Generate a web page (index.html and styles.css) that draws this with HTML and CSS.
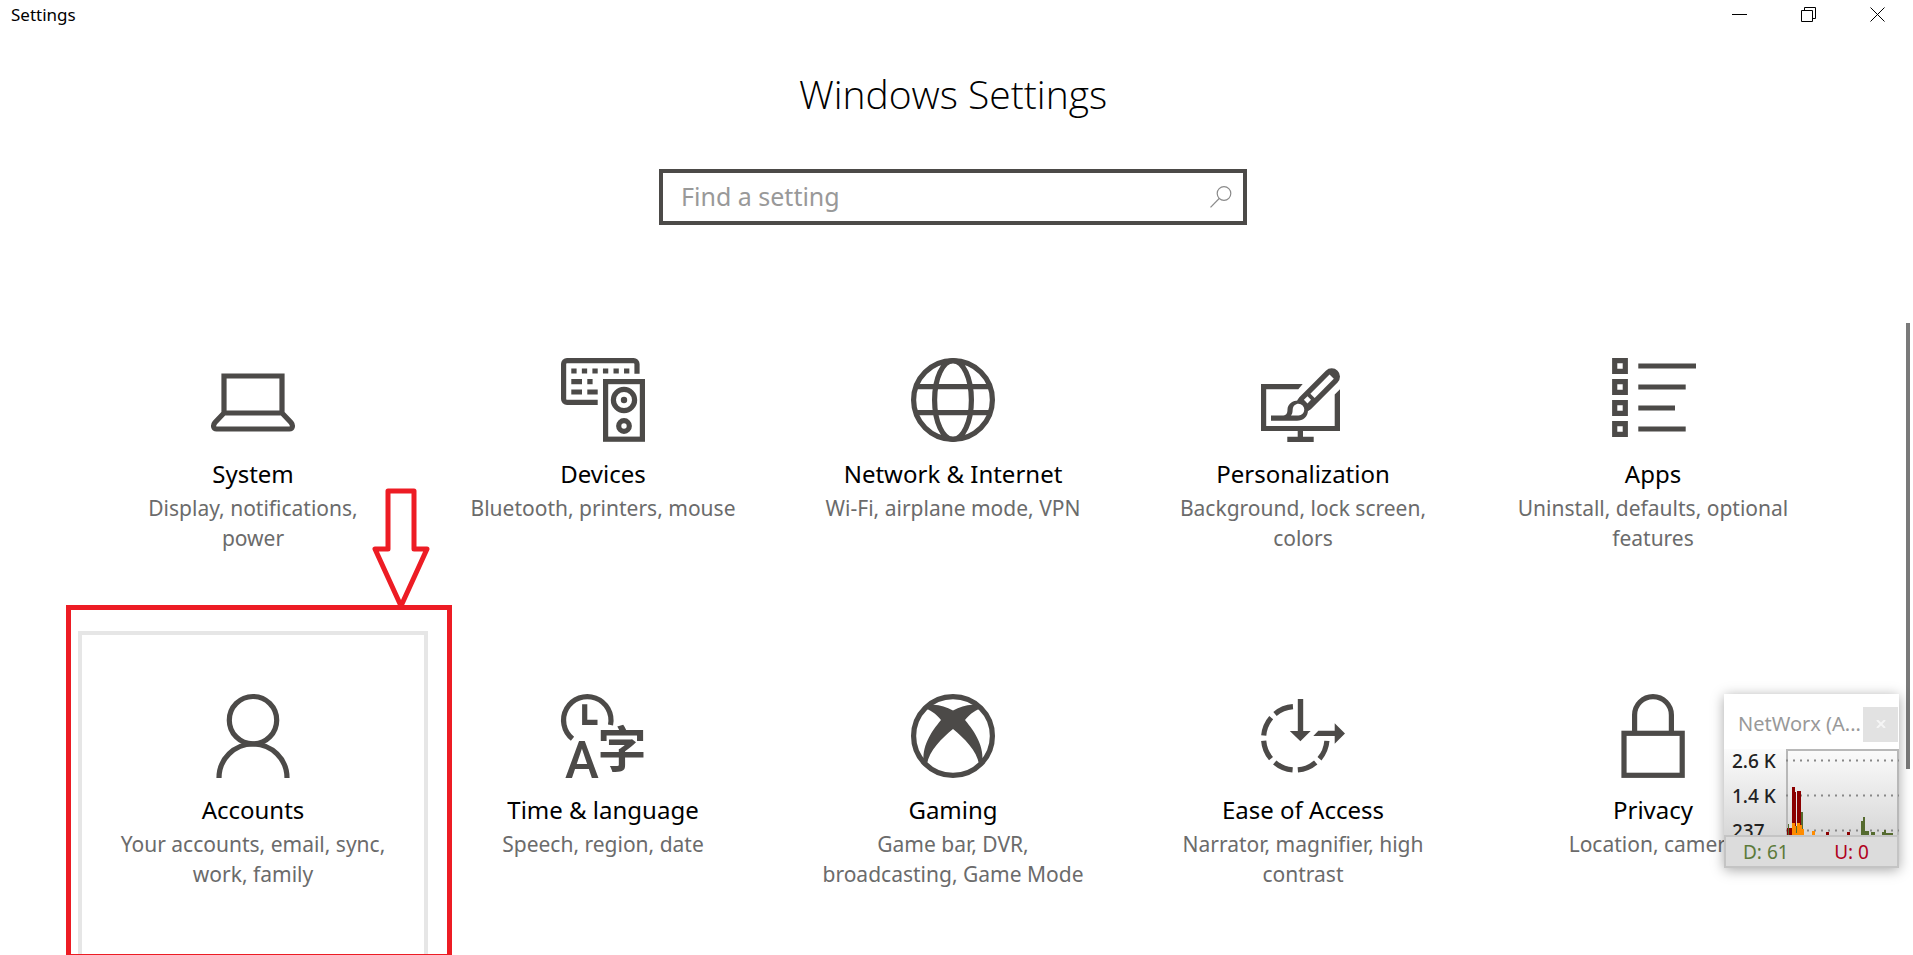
FILE: index.html
```html
<!DOCTYPE html>
<html lang="en">
<head>
  <meta charset="UTF-8">
  <meta name="viewport" content="width=device-width, initial-scale=1.0">
  <title>Settings</title>
  <link rel="stylesheet" href="styles.css">
</head>
<body>
  <div class="titlebar">
    <span class="titlebar-text">Settings</span>
    <div class="window-controls">
      <button class="window-btn" aria-label="Minimize">
        <svg width="15" height="15" viewBox="0 0 15 15"><path d="M0 7.5H15"/></svg>
      </button>
      <button class="window-btn" aria-label="Restore">
        <svg width="15" height="15" viewBox="0 0 15 15"><path d="M.5 3.5H11.5V14.5H.5ZM3.5 3V.5H14.5V11.5H12"/></svg>
      </button>
      <button class="window-btn" aria-label="Close">
        <svg width="15" height="15" viewBox="0 0 15 15"><path d="M.5 .5L14.5 14.5M14.5 .5L.5 14.5"/></svg>
      </button>
    </div>
  </div>

  <main class="settings">
    <h1>Windows Settings</h1>

    <form class="search">
      <input type="text" class="search-input" placeholder="Find a setting" aria-label="Find a setting">
      <button type="button" class="search-btn" aria-label="Search">
        <svg width="22" height="22" viewBox="0 0 22 22"><circle cx="14" cy="7.5" r="6.8"/><path d="M9.2 12.5L.5 21.3"/></svg>
      </button>
    </form>

    <div class="tiles">
      <a href="#system" class="tile">
        <svg class="icon" viewBox="0 0 84 84">
          <path d="M13 55V18H71V55ZM13 55L4 64.5C1.5 67.5 2.5 71 5.5 71H78.5C81.5 71 82.5 67.5 80 64.5L71 55"/>
        </svg>
        <span class="tile-title">System</span>
        <span class="tile-text">Display, notifications, power</span>
      </a>

      <a href="#devices" class="tile">
        <svg class="icon" viewBox="0 0 84 84">
          <path d="M76 15.7V6A3.4 3.4 0 0 0 72.6 2.6H6A3.4 3.4 0 0 0 2.6 6V41A3.4 3.4 0 0 0 6 44.4H36.7"/>
          <path d="M10.3 13H68.5" stroke-dasharray="5.3 5.25"/>
          <path d="M10.3 23.6H21M26.3 23.6H31.6M10.3 34H21M26.3 34H36.7"/>
          <rect x="44.6" y="23.6" width="36.8" height="57.6"/>
          <circle cx="63" cy="42" r="10.6"/>
          <circle cx="63" cy="42" r="3.2" class="solid"/>
          <circle cx="63" cy="68" r="5.3"/>
        </svg>
        <span class="tile-title">Devices</span>
        <span class="tile-text">Bluetooth, printers, mouse</span>
      </a>

      <a href="#network" class="tile">
        <svg class="icon" viewBox="0 0 84 84">
          <circle cx="42" cy="42" r="39.4"/>
          <ellipse cx="42" cy="42" rx="18.4" ry="39.4"/>
          <path d="M5 28.7H79M5 54.7H79"/>
        </svg>
        <span class="tile-title">Network &amp; Internet</span>
        <span class="tile-text">Wi-Fi, airplane mode, VPN</span>
      </a>

      <a href="#personalization" class="tile">
        <svg class="icon" viewBox="0 0 84 84">
          <path class="solid" d="M0 26H41.7L37.3 31.3H5.2V68H73.7V36.5L79 31.3V73H42V78.7H52.7V84H26.3V78.7H36.7V73H0Z"/>
          <path class="handle" d="M70.7 18.6L44 45.3"/>
          <path class="solid" d="M10 57.6H21C25 57.6 26.5 56 26.5 51C27 46 32 42.6 37 42.6C43 43 47 47 47 52C47 59 42 62.8 36 62.8H10Z"/>
          <path class="hollow-line" d="M70.7 18.6L51.5 37.8"/>
          <path class="hollow" d="M46.5 38.2L50 41.8L46.5 45.4L42.9 41.8Z"/>
          <path class="hollow" d="M37.5 45.8A5.8 5.8 0 0 1 37.5 57.4H30C32 55 31.4 53 31.7 51.5C32 48 34.5 45.8 37.5 45.8Z"/>
        </svg>
        <span class="tile-title">Personalization</span>
        <span class="tile-text">Background, lock screen, colors</span>
      </a>

      <a href="#apps" class="tile">
        <svg class="icon" viewBox="0 0 84 84">
          <path d="M3.7 2.7H14.3V13.3H3.7ZM3.7 23.7H14.3V34.3H3.7ZM3.7 44.7H14.3V55.3H3.7ZM3.7 65.7H14.3V76.3H3.7Z"/>
          <path d="M27.3 8H85M27.3 29H74.7M27.3 50H64M27.3 71H74.7"/>
        </svg>
        <span class="tile-title">Apps</span>
        <span class="tile-text">Uninstall, defaults, optional features</span>
      </a>

      <a href="#accounts" class="tile active">
        <svg class="icon" viewBox="0 0 84 84">
          <circle cx="42" cy="26.2" r="23.7"/>
          <path d="M8 84A34 34 0 0 1 76 84"/>
        </svg>
        <span class="tile-title">Accounts</span>
        <span class="tile-text">Your accounts, email, sync, work, family</span>
        <span class="highlight"></span>
        <svg class="arrow" width="60" height="122" viewBox="0 0 60 122">
          <path d="M16 3H42V61H55L29 118L3 61H16Z"/>
        </svg>
      </a>

      <a href="#time" class="tile">
        <svg class="icon" viewBox="0 0 84 84">
          <path d="M11.5 44.8A23.7 23.7 0 1 1 49.5 31"/>
          <path d="M23.7 10.3V28.4H36.5"/>
          <text class="letter" x="21" y="84" font-size="51">A</text>
          <text class="hanzi" x="61" y="73" font-size="49">字</text>
        </svg>
        <span class="tile-title">Time &amp; language</span>
        <span class="tile-text">Speech, region, date</span>
      </a>

      <a href="#gaming" class="tile">
        <svg class="icon" viewBox="0 0 84 84">
          <circle cx="42" cy="42" r="39.4"/>
          <path class="solid" d="M12 14C20 8 32 11 42 16.5C52 11 64 8 72 14C65 15 59 20 54 26C64 38 74 53 71 70L68 70C66 57 53 44 42 35C31 44 18 57 16 70L13 70C10 53 20 38 30 26C25 20 19 15 12 14Z"/>
        </svg>
        <span class="tile-title">Gaming</span>
        <span class="tile-text">Game bar, DVR, broadcasting, Game Mode</span>
      </a>

      <a href="#ease" class="tile">
        <svg class="icon" viewBox="0 0 84 84">
          <path d="M66 44.3A31.7 31.7 0 1 1 34.3 12.6" stroke-dasharray="19.6 5.3" stroke-dashoffset="-2.65"/>
          <path class="solid" d="M36.8 5H42.2V37H49.7L39.4 47.3L28.8 37H36.8Z"/>
          <path class="solid" d="M57.3 36.8H73.7V29.2L84 39.4L73.7 49.8V42H52.3Z"/>
        </svg>
        <span class="tile-title">Ease of Access</span>
        <span class="tile-text">Narrator, magnifier, high contrast</span>
      </a>

      <a href="#privacy" class="tile">
        <svg class="icon" viewBox="0 0 84 84">
          <rect x="13" y="39.3" width="58.2" height="42"/>
          <path d="M23.6 38V21A18.4 18.4 0 0 1 60.4 21V38"/>
        </svg>
        <span class="tile-title">Privacy</span>
        <span class="tile-text">Location, camera</span>
      </a>
    </div>
  </main>

  <div class="scrollbar"></div>

  <!-- NetWorx floating widget -->
  <div class="networx">
    <div class="networx-header">
      <span class="networx-title">NetWorx (A...</span>
      <button class="networx-close" aria-label="Close NetWorx">
        <svg width="10" height="8" viewBox="0 0 10 8"><path d="M1 0L9 8M9 0L1 8"/></svg>
      </button>
    </div>
    <div class="networx-body">
      <div class="networx-scale">
        <span>2.6 K</span>
        <span>1.4 K</span>
        <span>237</span>
      </div>
      <svg class="networx-chart" width="113" height="86" viewBox="0 0 113 86">
        <path class="frame" d="M1 86V1H112V86"/>
        <path class="dots" d="M0 11.5H113M0 46.5H113M0 81.5H113"/>
        <path class="up" d="M1 86V79H6V38H9V43H10V86ZM11 86V42H15V86ZM40 86V83H43V86ZM61 86V83H64V86Z"/>
        <path class="both" d="M6 86V74H9V77H11V74H14V76H16V80H18V86ZM26 86V82H29V86Z"/>
        <path class="down" d="M2 86V75H3V86ZM15 76V63H17V80H16V76ZM10 84V77H11V84ZM75 86V72H77V68H79V82H83V86ZM85 86V83H89V86ZM96 86V83H98V81H100V84H107V86Z"/>
      </svg>
    </div>
    <div class="networx-footer">
      <span class="rate-down">D: 61</span>
      <span class="rate-up">U: 0</span>
    </div>
  </div>
</body>
</html>
```
FILE: styles.css
```css
* {
  margin: 0;
  padding: 0;
  box-sizing: border-box;
}

body {
  height: 100vh;
  overflow: hidden;
  position: relative;
  background-color: #fff;
  color: #000;
  font-family: 'Segoe UI', 'Noto Sans', 'Open Sans', sans-serif;
}

button {
  border: none;
  background: none;
  font: inherit;
}

/* Title bar */
.titlebar {
  display: flex;
  justify-content: space-between;
  align-items: center;
  height: 30px;
  padding: 0 1px 0 11px;
}

.titlebar-text {
  font-size: 17px;
  line-height: 30px;
}

.window-controls {
  display: flex;
}

.window-btn {
  display: flex;
  justify-content: center;
  width: 69px;
  height: 30px;
  padding-top: 7px;
}

.window-btn svg {
  fill: none;
  stroke: #000;
}

/* Main area */
.settings {
  padding-right: 7px;
}

h1 {
  margin-top: 37px;
  font-family: 'Segoe UI Light', 'Open Sans', sans-serif;
  font-size: 39px;
  font-weight: 300;
  line-height: 54px;
  text-align: center;
}

.search {
  display: flex;
  align-items: center;
  width: 588px;
  height: 56px;
  margin: 48px auto 70px;
  padding: 0 11px 0 18px;
  border: 4px solid #4c4a48;
}

.search-input {
  flex: 1;
  height: 46px;
  margin-bottom: 2px;
  border: none;
  outline: none;
  background: transparent;
  font: inherit;
  font-size: 25px;
}

.search-input::placeholder {
  color: #999;
  opacity: 1;
}

.search-btn svg {
  display: block;
  fill: none;
  stroke: #8a8a8a;
  stroke-width: 1.2;
}

/* Tiles */
.tiles {
  display: grid;
  grid-template-columns: repeat(auto-fit, 350px);
  grid-auto-rows: 336px;
  justify-content: center;
  padding: 0 70px;
}

.tile {
  position: relative;
  display: flex;
  flex-direction: column;
  align-items: center;
  padding: 59px 34px 0;
  border: 4px solid transparent;
  color: inherit;
  text-align: center;
  text-decoration: none;
}

.tile.active {
  border-color: #e6e6e6;
}

.icon {
  width: 84px;
  height: 84px;
  margin-bottom: 13px;
  overflow: visible;
  fill: none;
  stroke: #4c4a48;
  stroke-width: 5.2;
}

.icon .solid {
  fill: #4c4a48;
  stroke: none;
}

.icon .hollow {
  fill: #fff;
  stroke: none;
}

.icon .handle {
  stroke-width: 16.6;
  stroke-linecap: round;
}

.icon .hollow-line {
  stroke: #fff;
  stroke-width: 6;
}

.icon text {
  fill: #4c4a48;
  stroke: none;
  text-anchor: middle;
}

.icon .letter {
  font-family: 'Roboto', sans-serif;
  font-weight: 500;
}

.icon .hanzi {
  font-family: 'Noto Sans CJK SC', sans-serif;
  font-weight: 700;
}

.tile-title {
  font-size: 24px;
  line-height: 38px;
}

.tile-text {
  color: #6b6b6b;
  font-size: 21px;
  line-height: 30px;
}

/* Red marker round the Accounts tile */
.highlight {
  position: absolute;
  top: -30px;
  left: -16px;
  width: 386px;
  height: 354px;
  border: 5px solid #ed1c24;
}

.arrow {
  position: absolute;
  top: -147px;
  left: 290px;
  fill: none;
  stroke: #ed1c24;
  stroke-width: 5;
  stroke-linejoin: round;
}

.scrollbar {
  position: absolute;
  top: 323px;
  right: 3px;
  width: 4px;
  height: 446px;
  background-color: #7a7a7a;
}

/* NetWorx widget */
.networx {
  position: absolute;
  right: 14px;
  bottom: 87px;
  width: 175px;
  background-color: #fff;
  box-shadow: 0 2px 12px rgba(0, 0, 0, 0.35);
}

.networx-header {
  display: flex;
  justify-content: space-between;
  align-items: center;
  height: 55px;
  padding: 10px 1px 5px 14px;
}

.networx-title {
  color: #999;
  font-size: 20px;
  line-height: 30px;
  white-space: nowrap;
}

.networx-close {
  display: flex;
  flex-shrink: 0;
  justify-content: center;
  align-items: center;
  width: 35px;
  height: 35px;
  background-color: #e2e2e2;
}

.networx-close svg {
  stroke: #f5f5f5;
  stroke-width: 2;
}

.networx-body {
  display: flex;
  justify-content: space-between;
  height: 86px;
  overflow: hidden;
  background: linear-gradient(#fbfbfb, #d8d8d8);
}

.networx-scale {
  display: flex;
  flex-direction: column;
  margin-top: -5px;
  padding-left: 8px;
  color: #222;
  font-size: 19px;
  font-weight: 500;
  line-height: 35px;
}

.networx-chart .frame {
  fill: none;
  stroke: #b8b8b8;
  stroke-width: 2;
}

.networx-chart .dots {
  stroke: #888;
  stroke-width: 2;
  stroke-dasharray: 2 5;
}

.networx-chart .up {
  fill: #8b0000;
}

.networx-chart .both {
  fill: #ff8c00;
}

.networx-chart .down {
  fill: #556b2f;
}

.networx-footer {
  display: flex;
  justify-content: space-between;
  height: 33px;
  padding: 0 28px 0 17px;
  border: 2px solid #c4c4c4;
  background-color: #dcdcdc;
  font-size: 19px;
  line-height: 30px;
}

.rate-down {
  color: #5b7a3a;
}

.rate-up {
  color: #b00020;
}
```
